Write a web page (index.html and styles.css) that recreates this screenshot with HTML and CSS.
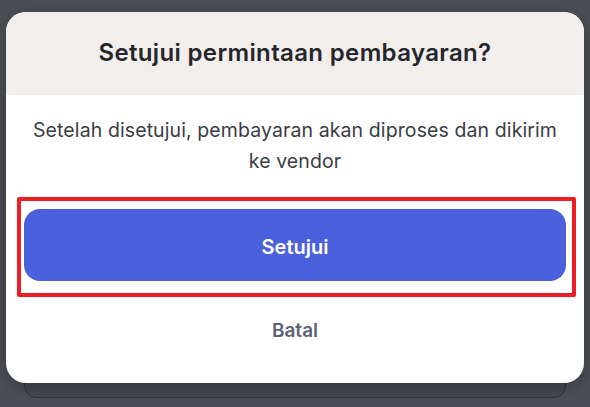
FILE: index.html
```html
<!DOCTYPE html>
<html lang="id">
<head>
    <meta charset="UTF-8">
    <meta name="viewport" content="width=device-width, initial-scale=1.0">
    <title>Setujui pembayaran</title>
    <link rel="stylesheet" href="styles.css">
</head>
<body>
    <div class="page">
        <div class="card-behind"></div>
    </div>

    <div class="modal">
        <div class="modal-header">
            <h2>Setujui permintaan pembayaran?</h2>
        </div>
        <div class="modal-body">
            <p>Setelah disetujui, pembayaran akan diproses dan dikirim ke vendor</p>
            <div class="actions">
                <button class="btn-primary">Setujui</button>
                <span class="highlight"></span>
                <button class="btn-link">Batal</button>
            </div>
        </div>
    </div>
</body>
</html>
```

FILE: styles.css
```css
* {
    margin: 0;
    padding: 0;
    box-sizing: border-box;
}

body {
    font-family: 'Inter', 'Noto Sans', sans-serif;
    background: #4b4e56;
    height: 407px;
    overflow: hidden;
    position: relative;
}

.page {
    padding: 20px 24px 0 24px;
}

.card-behind {
    height: 378px;
    background: #45484f;
    border: 1px solid #2f3238;
    border-radius: 12px;
}

.modal {
    position: absolute;
    top: 12px;
    left: 6px;
    width: 578px;
    height: 371px;
    background: #fff;
    border-radius: 20px;
    overflow: hidden;
    box-shadow: 0 4px 16px rgba(0, 0, 0, 0.25);
}

.modal-header {
    height: 83px;
    padding-bottom: 2px;
    background: #f1eeeb;
    display: flex;
    align-items: center;
    justify-content: center;
}

.modal-header h2 {
    font-size: 24px;
    font-weight: 600;
    color: #24262b;
    letter-spacing: 0.35px;
}

.modal-body {
    padding: 20px 18px 0 18px;
    text-align: center;
}

.modal-body p {
    font-size: 19.5px;
    line-height: 31px;
    letter-spacing: 0.1px;
    color: #3a3d44;
    padding: 0 4px;
}

.actions {
    position: relative;
    display: flex;
    flex-direction: column;
    align-items: center;
    margin-top: 32px;
}

.btn-primary {
    width: 100%;
    height: 72px;
    border: none;
    border-radius: 16px;
    background: #4a60dc;
    color: #fff;
    font-family: inherit;
    font-size: 20px;
    font-weight: 600;
    padding-top: 4px;
}

.highlight {
    position: absolute;
    top: -12px;
    left: -7px;
    width: 559px;
    height: 100px;
    border: 4px solid #ee1d24;
    border-radius: 2px;
}

.btn-link {
    margin-top: 38px;
    background: none;
    border: none;
    font-family: inherit;
    font-size: 19px;
    font-weight: 600;
    line-height: 24px;
    color: #5c6370;
}
```
